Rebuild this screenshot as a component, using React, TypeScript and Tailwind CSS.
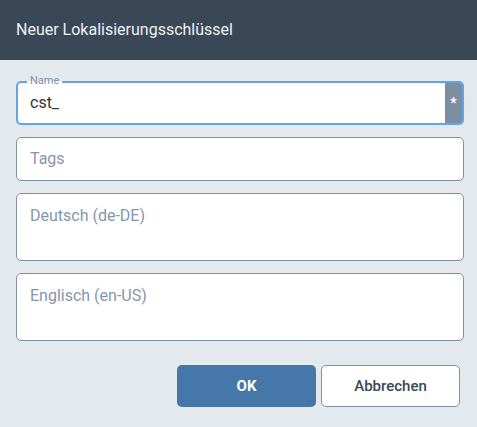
import React from 'react';

const font = { fontFamily: 'Roboto, "Liberation Sans", sans-serif' };

function Field({ label, tall }: { label: string; tall?: boolean }) {
  return (
    <div
      className={`bg-white border border-[#7f90a4] rounded-[5px] px-[13px] ${
        tall ? 'h-[68px] pt-[10px]' : 'h-[44px] flex items-center'
      }`}
    >
      <span className="text-[16px] text-[#8596ab]">{label}</span>
    </div>
  );
}

export default function App() {
  return (
    <div className="w-[477px] h-[427px] bg-[#e4e9ed] flex flex-col" style={font}>
      <div className="h-[60px] bg-[#3a4756] flex items-center px-4">
        <h1 className="text-[16px] text-[#eef1f4]">Neuer Lokalisierungsschlüssel</h1>
      </div>

      <div className="pl-4 pr-[13px] pt-[21px] flex flex-col">
        <div className="relative h-[44px] bg-white border-2 border-[#60a5e8] rounded-[5px] flex items-center pl-[12px]">
          <span className="absolute -top-[9px] left-[9px] px-[3px] text-[11px] leading-[14px] text-[#7f90a4] [background:linear-gradient(to_bottom,#e4e9ed_50%,#ffffff_50%)]">
            Name
          </span>
          <span className="text-[16px] text-[#2f3640]">cst_</span>
          <div className="ml-auto h-full w-[17px] bg-[#7d8ea3] rounded-r-[2px] flex items-center justify-center text-white text-[14px] font-bold">
            *
          </div>
        </div>

        <div className="mt-[12px]">
          <Field label="Tags" />
        </div>
        <div className="mt-[12px]">
          <Field label="Deutsch (de-DE)" tall />
        </div>
        <div className="mt-[12px]">
          <Field label="Englisch (en-US)" tall />
        </div>

        <div className="flex justify-end gap-[5px] mt-[24px] pr-[4px]">
          <button className="w-[139px] h-[42px] rounded-[5px] bg-[#4578a8] text-white text-[15px] font-bold">
            OK
          </button>
          <button className="w-[139px] h-[42px] rounded-[5px] bg-white border border-[#7f90a4] text-[#3a4756] text-[15px] font-medium">
            Abbrechen
          </button>
        </div>
      </div>
    </div>
  );
}
